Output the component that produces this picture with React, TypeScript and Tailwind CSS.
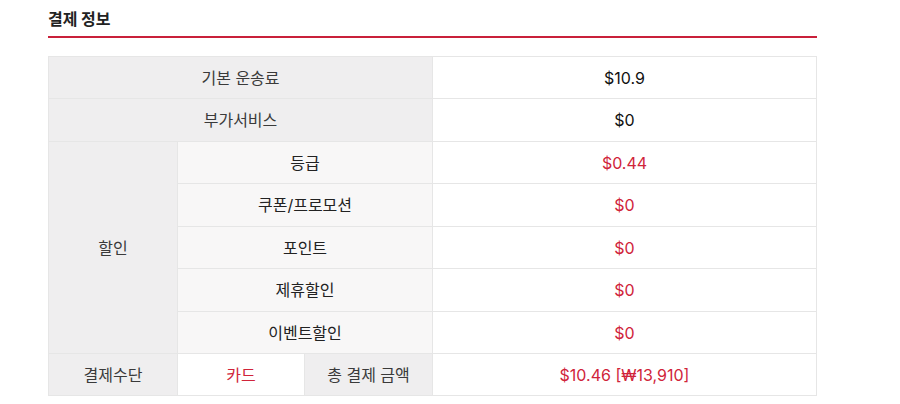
const discounts = [
  { label: '등급', value: '$0.44' },
  { label: '쿠폰/프로모션', value: '$0' },
  { label: '포인트', value: '$0' },
  { label: '제휴할인', value: '$0' },
  { label: '이벤트할인', value: '$0' },
];

const th = 'border border-[#e6e6e6] bg-[#efeeef] text-[#3a3a3a] font-normal text-center';
const sub = 'border border-[#e6e6e6] bg-[#f8f7f7] text-[#222] text-center';
const val = 'border border-[#e6e6e6] bg-white text-center';

export default function App() {
  return (
    <div className="w-[900px] h-[404px] bg-white pl-[48px] pt-[6px] font-['Inter','Noto_Sans_CJK_KR',sans-serif] text-[16px]">
      <div className="w-[769px]">
        <h2 className="text-[16px] font-bold text-[#222] leading-[24px] pb-[6px] border-b-[2px] border-[#c9203a] font-['Noto_Sans_CJK_KR',sans-serif]">결제 정보</h2>
        <table className="mt-[18px] w-[769px] border-collapse table-fixed">
          <colgroup>
            <col className="w-[129px]" />
            <col className="w-[127px]" />
            <col className="w-[128px]" />
            <col />
          </colgroup>
          <tbody>
            <tr className="h-[42px]">
              <th colSpan={3} className={th}>기본 운송료</th>
              <td className={val + ' text-[#111]'}>$10.9</td>
            </tr>
            <tr className="h-[43px]">
              <th colSpan={3} className={th}>부가서비스</th>
              <td className={val + ' text-[#111]'}>$0</td>
            </tr>
            {discounts.map((d, i) => (
              <tr key={d.label} className={i % 2 === 0 ? 'h-[42px]' : 'h-[43px]'}>
                {i === 0 && (
                  <th rowSpan={5} className={th}>할인</th>
                )}
                <td colSpan={2} className={sub}>{d.label}</td>
                <td className={val + ' text-[#d0243a]'}>{d.value}</td>
              </tr>
            ))}
            <tr className="h-[42px]">
              <th className={th}>결제수단</th>
              <td className={val + ' text-[#d0243a]'}>카드</td>
              <th className={th}>총 결제 금액</th>
              <td className={val + ' text-[#d0243a]'}>$10.46 [₩13,910]</td>
            </tr>
          </tbody>
        </table>
      </div>
    </div>
  );
}
